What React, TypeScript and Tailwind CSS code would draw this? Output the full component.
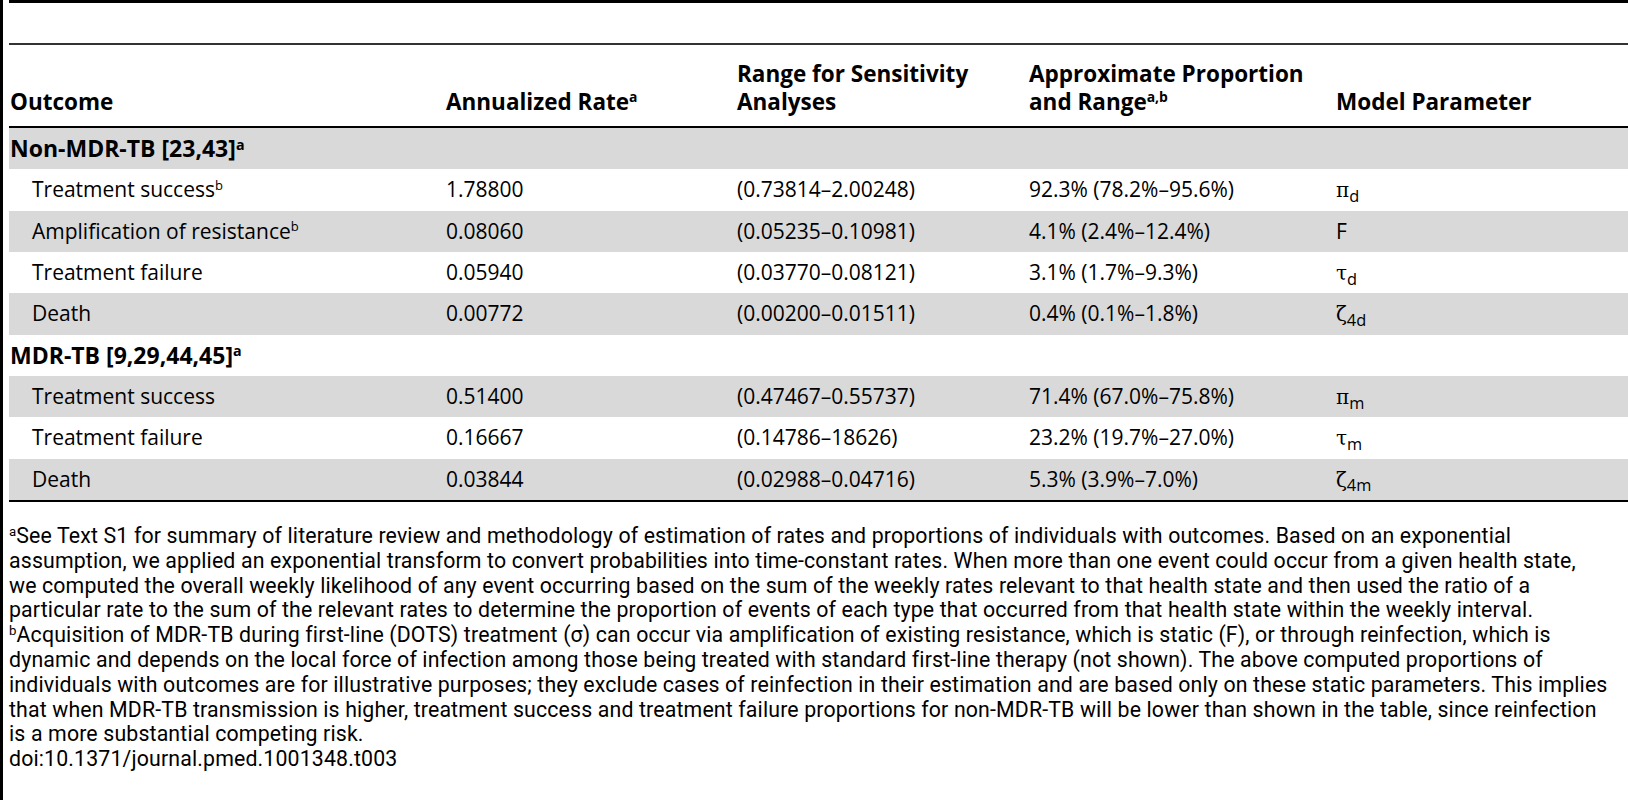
import React from "react";

type Row = {
  outcome: React.ReactNode;
  rate: string;
  range: string;
  prop: string;
  param: React.ReactNode;
  shaded: boolean;
};

const Sup = ({ children }: { children: React.ReactNode }) => (
  <sup className="text-[0.62em] leading-none relative -top-[0.55em]">{children}</sup>
);

const Param = ({ sym, sub }: { sym: string; sub?: string }) => (
  <span>
    <span className="font-['DejaVu_Serif',serif] text-[20px]">{sym}</span>
    {sub && <sub className="text-[0.78em] leading-none relative top-[0.3em]">{sub}</sub>}
  </span>
);

const nonMdr: Row[] = [
  {
    outcome: (
      <>
        Treatment success<Sup>b</Sup>
      </>
    ),
    rate: "1.78800",
    range: "(0.73814–2.00248)",
    prop: "92.3% (78.2%–95.6%)",
    param: <Param sym="π" sub="d" />,
    shaded: false,
  },
  {
    outcome: (
      <>
        Amplification of resistance<Sup>b</Sup>
      </>
    ),
    rate: "0.08060",
    range: "(0.05235–0.10981)",
    prop: "4.1% (2.4%–12.4%)",
    param: <span>F</span>,
    shaded: true,
  },
  {
    outcome: "Treatment failure",
    rate: "0.05940",
    range: "(0.03770–0.08121)",
    prop: "3.1% (1.7%–9.3%)",
    param: <Param sym="τ" sub="d" />,
    shaded: false,
  },
  {
    outcome: "Death",
    rate: "0.00772",
    range: "(0.00200–0.01511)",
    prop: "0.4% (0.1%–1.8%)",
    param: <Param sym="ζ" sub="4d" />,
    shaded: true,
  },
];

const mdr: Row[] = [
  {
    outcome: "Treatment success",
    rate: "0.51400",
    range: "(0.47467–0.55737)",
    prop: "71.4% (67.0%–75.8%)",
    param: <Param sym="π" sub="m" />,
    shaded: true,
  },
  {
    outcome: "Treatment failure",
    rate: "0.16667",
    range: "(0.14786–18626)",
    prop: "23.2% (19.7%–27.0%)",
    param: <Param sym="τ" sub="m" />,
    shaded: false,
  },
  {
    outcome: "Death",
    rate: "0.03844",
    range: "(0.02988–0.04716)",
    prop: "5.3% (3.9%–7.0%)",
    param: <Param sym="ζ" sub="4m" />,
    shaded: true,
  },
];

const grid = "grid grid-cols-[437px_291px_292px_307px_1fr]";

const GroupRow = ({ label, shaded }: { label: React.ReactNode; shaded: boolean }) => (
  <div className={`${grid} h-[41.33px] items-center font-bold text-[23px] ${shaded ? "bg-[#d9d9d9]" : ""}`}>
    <div className="pl-[1px] whitespace-nowrap">{label}</div>
  </div>
);

const DataRow = ({ row }: { row: Row }) => (
  <div className={`${grid} h-[41.33px] items-center ${row.shaded ? "bg-[#d9d9d9]" : ""}`}>
    <div className="pl-[23px] whitespace-nowrap">{row.outcome}</div>
    <div>{row.rate}</div>
    <div>{row.range}</div>
    <div>{row.prop}</div>
    <div>{row.param}</div>
  </div>
);

const footA = [
  "See Text S1 for summary of literature review and methodology of estimation of rates and proportions of individuals with outcomes. Based on an exponential",
  "assumption, we applied an exponential transform to convert probabilities into time-constant rates. When more than one event could occur from a given health state,",
  "we computed the overall weekly likelihood of any event occurring based on the sum of the weekly rates relevant to that health state and then used the ratio of a",
  "particular rate to the sum of the relevant rates to determine the proportion of events of each type that occurred from that health state within the weekly interval.",
];

const footB = [
  "Acquisition of MDR-TB during first-line (DOTS) treatment (σ) can occur via amplification of existing resistance, which is static (F), or through reinfection, which is",
  "dynamic and depends on the local force of infection among those being treated with standard first-line therapy (not shown). The above computed proportions of",
  "individuals with outcomes are for illustrative purposes; they exclude cases of reinfection in their estimation and are based only on these static parameters. This implies",
  "that when MDR-TB transmission is higher, treatment success and treatment failure proportions for non-MDR-TB will be lower than shown in the table, since reinfection",
  "is a more substantial competing risk.",
];

export default function App() {
  return (
    <div className="flex w-[1628px] h-[800px] overflow-hidden bg-white text-black">
      <div className="w-[3px] shrink-0 bg-black" />
      <div className="w-[6px] shrink-0" />
      <div className="flex-1 min-w-0 flex flex-col">
        <div className="h-[3px] bg-black" />
        <div className="h-[40px]" />
        <div className="h-[2px] bg-[#333]" />

        <div className="font-['Open_Sans',sans-serif] text-[21px]">
          <div className={`${grid} h-[81px] items-end pb-[10px] font-bold text-[22.5px] leading-[28px]`}>
            <div className="pl-[1px]">Outcome</div>
            <div>
              Annualized Rate<Sup>a</Sup>
            </div>
            <div>
              Range for Sensitivity
              <br />
              Analyses
            </div>
            <div>
              Approximate Proportion
              <br />
              and Range<Sup>a,b</Sup>
            </div>
            <div>Model Parameter</div>
          </div>
          <div className="h-[2px] bg-black" />

          <GroupRow
            shaded
            label={
              <>
                Non-MDR-TB [23,43]<Sup>a</Sup>
              </>
            }
          />
          {nonMdr.map((r, i) => (
            <DataRow key={`n${i}`} row={r} />
          ))}
          <GroupRow
            shaded={false}
            label={
              <>
                MDR-TB [9,29,44,45]<Sup>a</Sup>
              </>
            }
          />
          {mdr.map((r, i) => (
            <DataRow key={`m${i}`} row={r} />
          ))}
          <div className="h-[2px] bg-black" />
        </div>

        <div className="mt-[22px] font-['Roboto',sans-serif] text-[21.3px] leading-[24.8px] tracking-[0.15px] whitespace-nowrap">
          {footA.map((line, i) => (
            <div key={`a${i}`}>
              {i === 0 && <Sup>a</Sup>}
              {line}
            </div>
          ))}
          {footB.map((line, i) => (
            <div key={`b${i}`}>
              {i === 0 && <Sup>b</Sup>}
              {line}
            </div>
          ))}
          <div>doi:10.1371/journal.pmed.1001348.t003</div>
        </div>
      </div>
    </div>
  );
}
